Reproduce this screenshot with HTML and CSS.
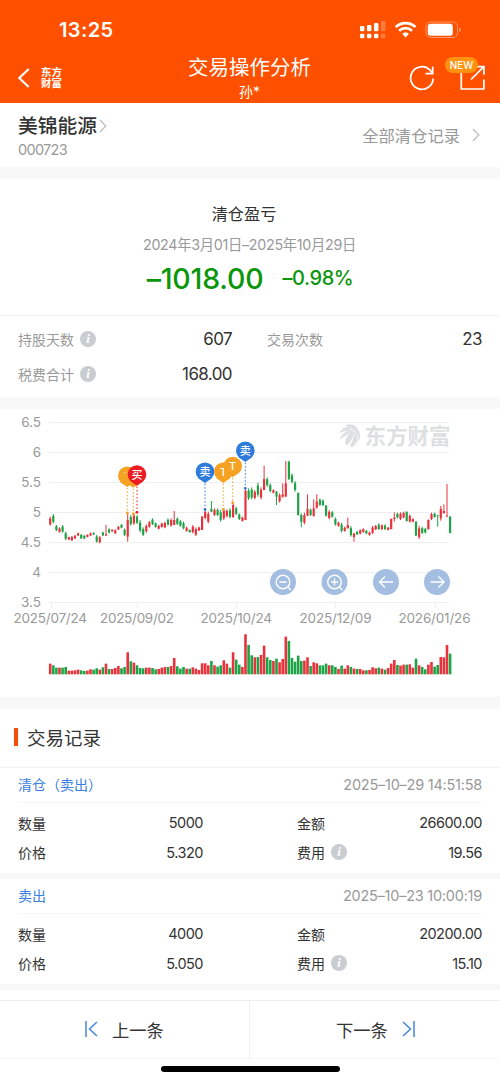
FILE: index.html
```
<!DOCTYPE html>
<html lang="zh-CN">
<head>
    <meta charset="UTF-8">
    <meta name="viewport" content="width=device-width, initial-scale=1.0">
    <link rel="stylesheet" href="styles.css">
    <title>交易操作分析</title>
</head>
<body>
    <header class="header">
        <div class="status-bar">
            <span class="time">13:25</span>
            <svg class="status-icons" width="104" height="20" viewBox="0 0 104 20">
                <g fill="#fff">
                    <rect x="1" y="6" width="4.4" height="5.3" rx="1.3"/>
                    <rect x="8" y="5" width="4.4" height="6.3" rx="1.3"/>
                    <rect x="15" y="3" width="4.4" height="8.3" rx="1.3"/>
                    <rect x="22" y="1" width="4.4" height="10.3" rx="1.3" opacity=".25"/>
                    <rect x="1" y="13.7" width="4.4" height="4.5" rx="1.3"/>
                    <rect x="8" y="13.7" width="4.4" height="4.5" rx="1.3"/>
                    <rect x="15" y="13.7" width="4.4" height="4.5" rx="1.3"/>
                    <rect x="22" y="13.7" width="4.4" height="4.5" rx="1.3" opacity=".25"/>
                    <path d="M43.2 13.8a5 5 0 0 1 6.8 0l-3.4 3.6z"/>
                </g>
                <g fill="none" stroke="#fff" stroke-width="2.7">
                    <path d="M36.7 7.1a14.3 14.3 0 0 1 19.8 0"/>
                    <path d="M40.2 10.8a9.2 9.2 0 0 1 12.8 0"/>
                </g>
                <rect x="67" y="2" width="31.5" height="15.5" rx="4.5" fill="none" stroke="#fff" stroke-opacity=".4"/>
                <rect x="68.8" y="3.8" width="25" height="12" rx="2.8" fill="#fff"/>
                <path d="M100.3 7.5c2 .8 2 3.8 0 4.6z" fill="#fff" opacity=".5"/>
            </svg>
        </div>
        <div class="nav-bar">
            <div class="nav-left">
                <svg width="12" height="20" viewBox="0 0 12 20"><path d="M10.7 1L1.3 10l9.4 9" fill="none" stroke="#fff" stroke-width="2.1"/></svg>
                <span class="brand">东方<br>财富</span>
            </div>
            <div class="nav-title">
                <h1>交易操作分析</h1>
                <p>孙*</p>
            </div>
            <div class="nav-right">
                <svg width="26" height="26" viewBox="0 0 26 26" fill="none" stroke="#fff" stroke-width="1.7">
                    <path d="M24.2 13.6a11.3 11.3 0 1 1-3.4-8.7l2.6 3"/>
                    <path d="M23.7 1.5v7.2h-7.3"/>
                </svg>
                <div class="share">
                    <svg width="26" height="26" viewBox="0 0 26 26" fill="none" stroke="#fff" stroke-width="1.7">
                        <path d="M1.3 8v16h22.6V14.5M11 14.5L23.6 1.9M16.5 1.7h7.4v8"/>
                    </svg>
                    <span class="new">NEW</span>
                </div>
            </div>
        </div>
    </header>

    <section class="stock">
        <div>
            <h2>美锦能源<svg width="8" height="14" viewBox="0 0 8 14"><path d="M1 1l5.8 6L1 13" fill="none" stroke="#c4c4c4" stroke-width="1.5"/></svg></h2>
            <p class="code">000723</p>
        </div>
        <div class="all-records">全部清仓记录<svg width="8" height="14" viewBox="0 0 8 14"><path d="M1 1l5.8 6L1 13" fill="none" stroke="#c4c4c4" stroke-width="1.5"/></svg></div>
    </section>

    <section class="profit">
        <h3>清仓盈亏</h3>
        <p class="period">2024年3月01日–2025年10月29日</p>
        <p class="result"><span class="amount">–1018.00</span><span class="rate">–0.98%</span></p>
    </section>
    <section class="stats">
        <div class="stat"><span>持股天数<i class="info">i</i></span><b>607</b></div>
        <div class="stat"><span>交易次数</span><b>23</b></div>
        <div class="stat"><span>税费合计<i class="info">i</i></span><b>168.00</b></div>
    </section>

    <section class="chart">
        <svg width="500" height="288" viewBox="0 0 500 288">
            <path class="grid" d="M49 13.5h400M49 43.5h400M49 73.5h400M49 103.5h400M49 133.5h400M49 163.5h400M49 193.5h400M51.5 193v6M137.5 193v6M236.5 193v6M335.5 193v6M435.5 193v6"/>
            <g class="axis" text-anchor="end">
                <text x="41" y="18">6.5</text>
                <text x="41" y="48">6</text>
                <text x="41" y="78">5.5</text>
                <text x="41" y="108">5</text>
                <text x="41" y="138">4.5</text>
                <text x="41" y="168">4</text>
                <text x="41" y="198">3.5</text>
            </g>
            <g class="axis">
                <text x="13.5" y="214" textLength="73.5">2025/07/24</text>
                <text x="100" y="214" textLength="74">2025/09/02</text>
                <text x="200.5" y="214" textLength="71.5">2025/10/24</text>
                <text x="299.5" y="214" textLength="72">2025/12/09</text>
                <text x="398.5" y="214" textLength="72">2026/01/26</text>
            </g>
            <g class="watermark">
                <path d="M339 24c3-5 8-7 13-6c-2 4-8 4-13 6z"/>
                <path d="M340 31c1-6 7-10 13-11c-2 5-8 6-13 11z"/>
                <path d="M345 34c1-6 4-10 9-13c1 5-3 10-5 14c-1 1-4 1-4-1z"/>
                <path d="M350 37c2-4 4-9 5-15c4 4 3 11-1 15c-1 1-3 1-4 0z"/>
                <path d="M357 34c2-5 1-10-1-15c4 4 6 10 1 15z"/>
                <path d="M345 16.5c5-2.500 10-1 12 3c3 3 3.500 7 2 10c-1-6-7-11-14-13z"/>
                <text x="364.5" y="35" textLength="86">东方财富</text>
            </g>
            <g id="candles"></g>
            <g id="volumes"></g>
            <g id="markers"></g>
            <g class="tools">
                <circle cx="283" cy="173" r="13"/>
                <circle cx="334.5" cy="173" r="13"/>
                <circle cx="386" cy="173" r="13"/>
                <circle cx="437" cy="173" r="13"/>
                <path d="M290.7 181l-3-3.4M279.5 173h7M342.2 181l-3-3.4M331 173h7M334.5 169.5v7M393 173h-13.500M385 167.5l-5.500 5.500l5.500 5.500M430.5 173H444M438.5 167.5l5.500 5.500l-5.500 5.500"/>
                <circle class="lens" cx="283" cy="173" r="6.8"/>
                <circle class="lens" cx="334.5" cy="173" r="6.8"/>
            </g>
        </svg>
    </section>

    <section class="records">
        <h2 class="records-title">交易记录</h2>
        <article class="record">
            <div class="record-head"><span class="type">清仓（卖出）</span><time>2025–10–29 14:51:58</time></div>
            <div class="record-body">
                <div class="cell"><span>数量</span><b>5000</b></div>
                <div class="cell"><span>金额</span><b>26600.00</b></div>
                <div class="cell"><span>价格</span><b>5.320</b></div>
                <div class="cell"><span>费用<i class="info">i</i></span><b>19.56</b></div>
            </div>
        </article>
        <article class="record">
            <div class="record-head"><span class="type">卖出</span><time>2025–10–23 10:00:19</time></div>
            <div class="record-body">
                <div class="cell"><span>数量</span><b>4000</b></div>
                <div class="cell"><span>金额</span><b>20200.00</b></div>
                <div class="cell"><span>价格</span><b>5.050</b></div>
                <div class="cell"><span>费用<i class="info">i</i></span><b>15.10</b></div>
            </div>
        </article>
    </section>

    <footer class="pager">
        <div class="prev"><svg width="13" height="16" viewBox="0 0 13 16"><path d="M1 0v16M12 1L4.5 8l7.5 7"/></svg>上一条</div>
        <div class="next">下一条<svg width="13" height="16" viewBox="0 0 13 16"><path d="M12 0v16M1 1l7.5 7L1 15"/></svg></div>
    </footer>
    <div class="home-bar"></div>

    <script src="chart.js"></script>
</body>
</html>
```

FILE: styles.css
```
* {
    box-sizing: border-box;
}

body {
    margin: 0;
    width: 500px;
    height: 1082px;
    overflow: hidden;
    background-color: #fff;
    color: #333;
    font-family: Inter, "Noto Sans CJK SC", sans-serif;
    font-size: 14px;
}

h1, h2, h3, p {
    margin: 0;
    font-weight: 400;
}

b {
    font-weight: 400;
}

svg {
    display: block;
    flex: none;
}

/* Header */
.header {
    height: 103px;
    background-color: #ff5000;
    color: #fff;
}

.status-bar {
    height: 52px;
    padding: 20px 38px 0 59px;
    display: flex;
    justify-content: space-between;
}

.time {
    font-size: 20px;
    line-height: 21px;
    font-weight: 600;
    letter-spacing: 0.4px;
}

.status-icons {
    margin-right: -1px;
}

.nav-bar {
    height: 51px;
    display: flex;
    padding: 0 14px 0 18px;
}

.nav-left, .nav-right {
    width: 120px;
    display: flex;
    align-items: center;
}

.nav-left {
    gap: 11px;
}

.brand {
    font-size: 10.4px;
    line-height: 11px;
    font-weight: 700;
}

.nav-title {
    flex: 1;
    padding: 1px 5px 0 0;
    text-align: center;
}

.nav-title h1 {
    font-size: 20.5px;
    line-height: 30px;
}

.nav-title p {
    font-size: 14px;
    line-height: 18px;
}

.nav-right {
    justify-content: flex-end;
    gap: 25px;
}

.share {
    position: relative;
}

.new {
    position: absolute;
    left: -15px;
    top: -8px;
    width: 33px;
    height: 16px;
    border-radius: 8px;
    background-color: #ff9210;
    font-size: 10px;
    line-height: 16px;
    font-weight: 500;
    text-align: center;
}

/* Stock name */
.stock {
    height: 76px;
    border-bottom: 12px solid #f8f8f8;
    padding: 9px 20px 0 18px;
    display: flex;
    justify-content: space-between;
}

.stock h2 {
    display: flex;
    align-items: center;
    gap: 2px;
    font-size: 19.8px;
    line-height: 28px;
    font-weight: 500;
}

.code {
    font-size: 14.5px;
    line-height: 19px;
    letter-spacing: -0.7px;
    color: #999;
}

.all-records {
    height: 45px;
    display: flex;
    align-items: center;
    gap: 12px;
    font-size: 16.3px;
    color: #999;
}

/* Profit */
.profit {
    height: 137px;
    border-bottom: 1px solid #f3f3f3;
    padding-top: 23px;
    text-align: center;
}

.profit h3 {
    font-size: 16.2px;
    line-height: 24px;
    padding-right: 12px;
}

.period {
    font-size: 14.3px;
    line-height: 20px;
    margin-top: 9px;
    padding-right: 1px;
    letter-spacing: -0.3px;
    color: #999;
}

.result {
    display: flex;
    justify-content: center;
    align-items: center;
    gap: 19px;
    height: 40px;
    margin-top: 3px;
    color: #0a960a;
}

.amount {
    font-size: 28.5px;
    font-weight: 500;
    letter-spacing: -0.2px;
}

.rate {
    font-size: 20px;
    font-weight: 500;
    letter-spacing: -0.4px;
}

.stats {
    height: 93px;
    border-bottom: 12px solid #f8f8f8;
    padding: 5px 18px 0;
    display: grid;
    grid-template-columns: 214px 215px;
    grid-auto-rows: 35px;
    column-gap: 35px;
}

.stat, .cell {
    display: flex;
    justify-content: space-between;
    align-items: center;
}

.stat span, .cell span {
    display: flex;
    align-items: center;
    gap: 6px;
}

.stat span {
    color: #999;
}

.stat b {
    font-size: 17px;
    letter-spacing: -0.6px;
}

.info {
    width: 16px;
    height: 16px;
    border-radius: 50%;
    background-color: #c9ccd1;
    color: #fff;
    font: italic bold 13px/16px "Liberation Serif", serif;
    text-align: center;
}

/* Chart */
.chart {
    height: 300px;
    border-bottom: 12px solid #f8f8f8;
}

.grid {
    stroke: #efefef;
}

.axis {
    font-size: 13.5px;
    fill: #999;
}

.watermark {
    fill: #dedfe2;
    font-size: 21.5px;
    font-weight: 700;
}

.up {
    fill: #e8333c;
}

.down {
    fill: #1ea446;
}

.pin {
    fill: #fff;
    font-size: 11px;
    font-weight: 500;
    text-anchor: middle;
}

.tools circle {
    fill: #a3bee0;
}

.tools path, .tools .lens {
    fill: none;
    stroke: #fff;
    stroke-width: 1.4;
}

/* Trade records */
.records-title {
    height: 59px;
    border-bottom: 1px solid #f3f3f3;
    padding: 0 0 2px 14px;
    display: flex;
    align-items: center;
    gap: 9px;
    font-size: 18.5px;
}

.records-title::before {
    content: "";
    width: 4px;
    height: 18px;
    background-color: #f4500c;
}

.record {
    height: 111px;
    border-bottom: 6px solid #f7f7f7;
}

.record-head {
    height: 35px;
    margin: 0 18px;
    padding-bottom: 2px;
    border-bottom: 1px solid #f5f5f5;
    display: flex;
    justify-content: space-between;
    align-items: center;
}

.type {
    color: #3a80e0;
}

.record-head time {
    font-size: 14.5px;
    letter-spacing: -0.24px;
    color: #999;
}

.record-body {
    padding: 5px 18px 0;
    display: grid;
    grid-template-columns: 185px 185px;
    grid-auto-rows: 29.5px;
    column-gap: 94px;
}

.cell b {
    font-size: 14.5px;
    letter-spacing: -0.5px;
}

/* Bottom pager */
.pager {
    height: 59px;
    margin-top: 10px;
    border-top: 1px solid #efefef;
    border-bottom: 1px solid #f7f7f7;
    display: flex;
    font-size: 17.3px;
}

.prev, .next {
    flex: 1;
    padding-bottom: 1px;
    display: flex;
    align-items: center;
    gap: 14px;
}

.prev {
    padding-left: 85px;
    border-right: 1px solid #efefef;
}

.next {
    padding-left: 86px;
}

.pager path {
    fill: none;
    stroke: #4585d8;
    stroke-width: 1.5;
}

.home-bar {
    width: 179px;
    height: 6px;
    margin: 7px auto 0;
    border-radius: 3px;
    background-color: #000;
}
```

FILE: chart.js
```
// [direction, volume, high, low, body top, body bottom], all in 1/3 px
const days = [
    ["r",32,335,362],["g",27,327,355],["g",20,360,378],["r",20,367,383],["g",20,360,383],["g",22,380,405],
    ["r",11,395,405],["r",11,393,408],["r",12,390,402],["r",14,383,393],["g",12,387,402],["g",10,390,402],
    ["r",11,388,397],["r",15,383,393],["g",14,382,390],["g",18,390,413],["r",14,393,415],["g",21,380,393],
    ["r",32,360,392,388,392],["g",16,370,385],["r",16,373,380],["r",19,373,387],["r",25,363,375],["g",18,357,370],
    ["g",22,370,393],["r",66,322,410,345,395],["g",39,330,362],["r",35,325,360],["g",27,330,357],["g",19,345,382],
    ["g",18,367,393],["r",20,358,383],["r",20,348,368],["g",19,340,360],["g",15,352,368],["r",16,360,373],
    ["r",20,353,368],["r",22,350,370],["g",22,340,362],["r",25,340,365],["r",49,318,360,345,360],["g",24,337,360],
    ["g",17,345,365],["g",22,350,373],["r",17,365,380],["g",17,373,383],["r",21,360,385],["r",17,367,393],
    ["r",13,365,378],["r",33,333,375,335,375],["r",33,315,343],["r",27,320,355],["g",40,288,320,312,320],["r",27,310,333],
    ["g",23,310,333],["g",27,315,350],["r",42,310,345],["r",32,313,337],["g",20,310,340],["r",66,293,337,300,337],
    ["g",44,305,330],["g",29,325,345],["r",22,335,350],["r",120,253,345,257,345],["g",88,250,285],["g",57,247,283],
    ["r",51,255,283],["g",52,233,275],["r",58,247,283],["r",86,182,255,222,255],["g",51,217,245],["g",43,235,262],
    ["r",40,253,265],["g",47,258,300,260,275],["r",36,265,293],["r",46,235,278,268,275],["r",113,168,275,235,275],["g",100,167,225,170,222],
    ["g",49,205,235],["g",38,228,260],["g",56,262,332,264,330],["g",40,325,367,330,350],["r",41,323,358],["r",51,268,333,312,332],
    ["g",25,310,333],["r",36,283,335,310,333],["r",33,268,311,290,308],["g",27,280,303],["g",27,283,303],["g",32,300,335,302,332],
    ["r",27,315,343],["g",27,318,338],["g",22,337,362],["r",16,350,365],["g",26,353,382],["r",17,365,380],
    ["r",27,338,370,360,370],["g",22,363,395],["r",17,385,410,385,396],["g",16,378,390],["r",16,373,388],["r",12,370,383],
    ["g",12,375,387],["r",13,380,392],["r",21,363,387],["r",18,360,375],["g",20,355,375],["r",17,358,375],
    ["g",14,358,375],["r",19,366,376],["r",32,340,373,342,372],["r",43,322,350,338,342],["g",28,323,340],["r",26,322,345],
    ["r",29,320,340],["g",29,320,350,320,348],["r",30,328,353],["r",20,340,352],["g",47,348,392,350,392],["r",27,362,402],
    ["g",22,365,387],["g",15,368,385],["r",29,343,373,345,373],["r",37,323,345],["g",23,323,338],["g",28,330,365,330,332],
    ["r",52,303,347],["r",51,298,325,318,325],["r",88,237,335,332,335],["g",62,333,385,335,384]
];

let candles = "";
let volumes = "";
days.forEach(([dir, volume, high, low, top, bottom], i) => {
    const x = 50.2 + i * 3.1;
    const cls = dir === "r" ? "up" : "down";
    const size = low - high;
    const y1 = ((top || high + size * 0.2) - 12) / 3;
    const y2 = ((bottom || low - size * 0.15) - 12) / 3;
    candles += `<rect class="${cls}" x="${x - 0.5}" y="${(high - 12) / 3}" width="1" height="${size / 3}"/>`;
    candles += `<rect class="${cls}" x="${x - 1.1}" y="${y1}" width="2.2" height="${y2 - y1}"/>`;
    volumes += `<rect class="${cls}" x="${x - 1.3}" y="${265.3 - volume / 3}" width="2.6" height="${volume / 3}"/>`;
});
document.getElementById("candles").innerHTML = candles;
document.getElementById("volumes").innerHTML = volumes;

// x, y of the pin centre, y of the trade point
const pins = [
    { x: 127.3, y: 66.8, to: 104, color: "#f5a223", text: "T" },
    { x: 133.3, y: 67.5, to: 105, color: "#f5a223", text: "" },
    { x: 137, y: 65.5, to: 103.3, color: "#ec1c24", text: "买" },
    { x: 205, y: 62.7, to: 100.5, color: "#2f7bdc", text: "卖" },
    { x: 223.3, y: 62.7, to: 100.3, color: "#f5a223", text: "T" },
    { x: 232.7, y: 57, to: 93.7, color: "#f5a223", text: "T" },
    { x: 245.3, y: 41.7, to: 79.3, color: "#2f7bdc", text: "卖" }
];

document.getElementById("markers").innerHTML = pins.map(p => `
    <path d="M${p.x} ${p.y + 12}V${p.to}" stroke="${p.color}" stroke-dasharray="1.5 2" fill="none"/>
    <circle cx="${p.x}" cy="${p.to}" r="1.4" fill="${p.color}"/>
    <circle cx="${p.x}" cy="${p.y}" r="9.3" fill="${p.color}"/>
    <path d="M${p.x - 6} ${p.y + 7}L${p.x} ${p.y + 11.3}L${p.x + 6} ${p.y + 7}z" fill="${p.color}"/>
    <text class="pin" x="${p.x}" y="${p.y + 4.2}">${p.text}</text>`).join("");
```
